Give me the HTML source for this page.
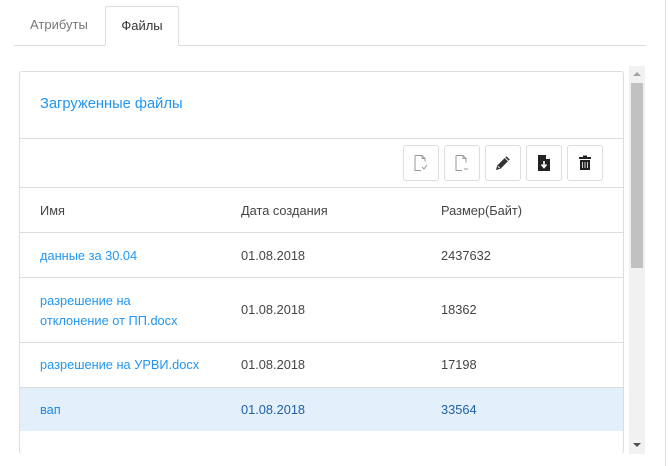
<!DOCTYPE html>
<html><head><meta charset="utf-8"><style>
*{box-sizing:border-box;margin:0;padding:0}
body{width:669px;height:466px;background:#fff;font-family:"Liberation Sans",sans-serif;font-size:12.5px;color:#333;position:relative;overflow:hidden}
.abs{position:absolute}
.tabline{left:14px;top:45px;width:632px;height:1px;background:#ddd}
.tab{top:6px;height:40px;line-height:38px;font-size:13px}
.panel{left:19px;top:71px;width:605px;height:383px;border:1px solid #ddd;border-radius:3px;border-bottom:none}
.hl{left:20px;width:603px;height:1px;background:#ddd}
.btn{top:145px;width:36px;height:36px;border:1px solid #ddd;border-radius:3px;background:#fff;display:flex;align-items:center;justify-content:center}
.t{font-size:12.8px;color:#444}
.blue{color:#2196f3}
</style></head><body>
<div class="abs tabline"></div>
<div class="abs tab" style="left:30px;color:#777">Атрибуты</div>
<div class="abs tab" style="left:105px;width:74px;border:1px solid #ddd;border-bottom:1px solid #fff;background:#fff;text-align:center;color:#333;border-radius:2px 2px 0 0">Файлы</div>
<div class="abs" style="left:665px;top:0;width:1px;height:466px;background:#ddd"></div>

<div class="abs panel"></div>
<div class="abs blue" style="left:40px;top:96px;font-size:14.7px">Загруженные файлы</div>
<div class="abs hl" style="top:138px"></div>

<div class="abs btn" style="left:403px"><svg width="16" height="18" viewBox="0 0 16 18" fill="none" stroke="#999" stroke-width="1"><path d="M2 1.5h7l3 3v3M2 1.5v15h6"/><path d="M9 1.5v3h3"/><path d="M9 13l2 2 3-4"/></svg></div>
<div class="abs btn" style="left:444px"><svg width="16" height="18" viewBox="0 0 16 18" fill="none" stroke="#999" stroke-width="1"><path d="M2 1.5h7l3 3v4M2 1.5v15h6"/><path d="M9 1.5v3h3"/><path d="M10 15h4"/></svg></div>
<div class="abs btn" style="left:485px"><svg width="18" height="18" viewBox="0 0 18 18"><path d="M2 16l1.2-4.5L12.5 2.2l3.3 3.3-9.3 9.3z" fill="#333"/><path d="M3.8 12.2l2 2M11 3.7l3.3 3.3" stroke="#fff" stroke-width="0.9"/></svg></div>
<div class="abs btn" style="left:526px"><svg width="14" height="18" viewBox="0 0 14 18"><path d="M1 1h8l4 4v12H1z" fill="#222"/><path d="M9 1v4h4" fill="#fff"/><path d="M7 7v6M4.5 10.5L7 13.5 9.5 10.5" stroke="#fff" stroke-width="1.6" fill="none"/></svg></div>
<div class="abs btn" style="left:567px"><svg width="14" height="16" viewBox="0 0 14 16"><rect x="1" y="2" width="12" height="2" fill="#222"/><rect x="5" y="0.5" width="4" height="2" fill="#222"/><path d="M2 5h10v10H2z" fill="#222"/><path d="M4.5 7v6M7 7v6M9.5 7v6" stroke="#fff" stroke-width="0.8"/></svg></div>

<div class="abs hl" style="top:187px"></div>
<div class="abs t" style="left:40px;top:203px">Имя</div>
<div class="abs t" style="left:241px;top:203px">Дата создания</div>
<div class="abs t" style="left:441px;top:203px">Размер(Байт)</div>
<div class="abs hl" style="top:232px"></div>

<div class="abs t blue" style="left:40px;top:248px">данные за 30.04</div>
<div class="abs t" style="left:241px;top:248px">01.08.2018</div>
<div class="abs t" style="left:441px;top:248px">2437632</div>
<div class="abs hl" style="top:277px"></div>

<div class="abs t blue" style="left:40px;top:291px;line-height:20px">разрешение на<br>отклонение от ПП.docx</div>
<div class="abs t" style="left:241px;top:302px">01.08.2018</div>
<div class="abs t" style="left:441px;top:302px">18362</div>
<div class="abs hl" style="top:342px"></div>

<div class="abs t blue" style="left:40px;top:357px">разрешение на УРВИ.docx</div>
<div class="abs t" style="left:241px;top:357px">01.08.2018</div>
<div class="abs t" style="left:441px;top:357px">17198</div>
<div class="abs hl" style="top:387px"></div>

<div class="abs" style="left:20px;top:388px;width:603px;height:43px;background:#e3f0fb"></div>
<div class="abs t" style="left:40px;top:402px;color:#1e88e5">вап</div>
<div class="abs t" style="left:241px;top:402px;color:#1f5fa8">01.08.2018</div>
<div class="abs t" style="left:441px;top:402px;color:#1f5fa8">33564</div>

<div class="abs" style="left:629px;top:66px;width:16px;height:388px;background:#f1f1f1"></div>
<div class="abs" style="left:631px;top:83px;width:12px;height:185px;background:#c1c1c1"></div>
<div class="abs" style="left:633px;top:72px;width:0;height:0;border-left:4px solid transparent;border-right:4px solid transparent;border-bottom:4px solid #a3a3a3"></div>
<div class="abs" style="left:633px;top:443px;width:0;height:0;border-left:4px solid transparent;border-right:4px solid transparent;border-top:4px solid #505050"></div>
</body></html>
